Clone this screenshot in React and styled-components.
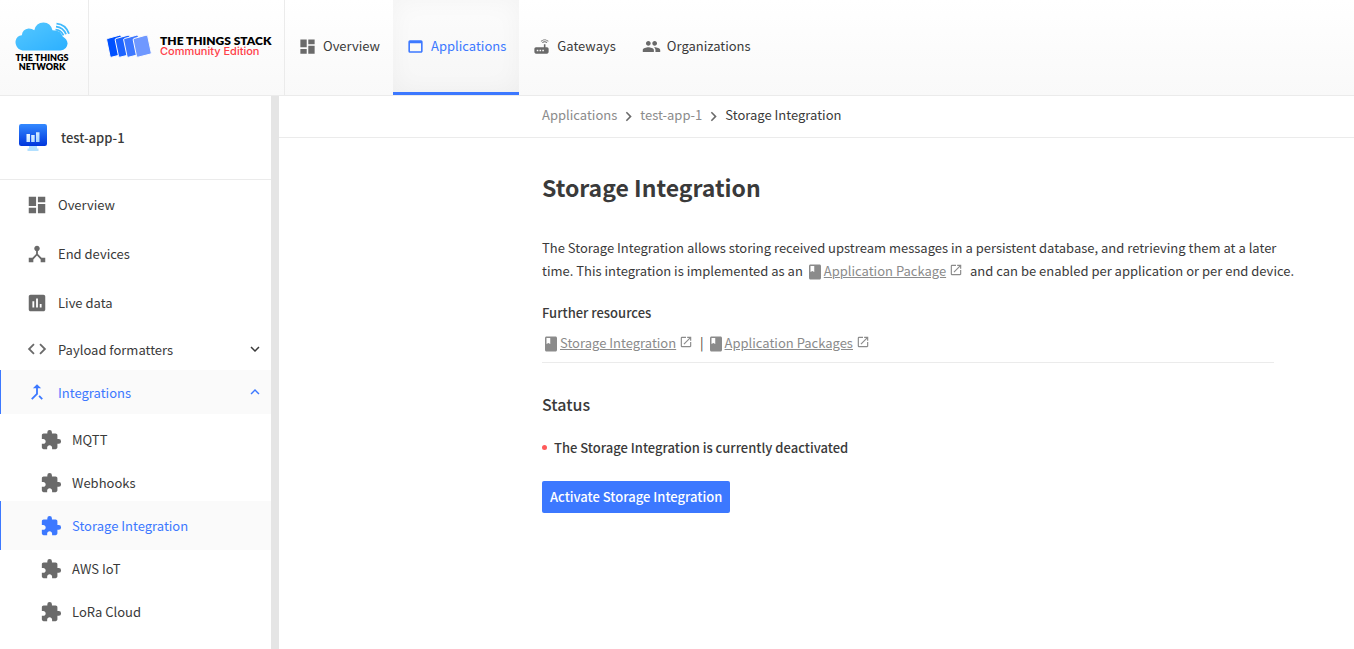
import React from 'react';
import styled, { createGlobalStyle, css } from 'styled-components';
import {
  MdDashboard, MdWebAsset, MdRouter, MdPeople, MdDeviceHub, MdAssessment, MdCode,
  MdCallMerge, MdExtension, MdExpandMore, MdExpandLess, MdChevronRight, MdBook, MdLaunch,
} from 'react-icons/md';

const color = {
  text: '#3a3a3a',
  icon: '#6a6a6a',
  subtle: '#8b8b8b',
  blue: '#3c78ff',
  border: '#ebebeb',
  hover: '#fafafa',
};

const GlobalStyle = createGlobalStyle`
  *, *::before, *::after { box-sizing: border-box; }
  body {
    margin: 0;
    background: #fff;
    color: ${color.text};
    font-family: "Noto Sans CJK SC", "Noto Sans", sans-serif;
    font-size: 13px;
    line-height: 23px;
  }
  a { color: inherit; text-decoration: none; }
  ul, ol { list-style: none; margin: 0; padding: 0; }
  h1, h2, h3, p { margin: 0; }
  svg { flex: none; }
`;

const Page = styled.div`
  display: flex;
  flex-direction: column;
  min-height: 100vh;
`;

const Header = styled.header`
  display: flex;
  height: 96px;
  border-bottom: 1px solid ${color.border};
  background: linear-gradient(#fff, #f9f9f9);
`;

const LogoLink = styled.a`
  display: flex;
  align-items: center;
  border-right: 1px solid ${color.border};
`;

const NetworkLogo = styled(LogoLink)`
  flex-direction: column;
  justify-content: center;
  width: 89px;
  padding: 0 4px 2px 0;
  color: #000;
  font: 800 9px/9px Lato, sans-serif;
  text-align: center;
  svg { margin-bottom: 2px; }
`;

const StackLogo = styled(LogoLink)`
  gap: 8px;
  width: 196px;
  padding: 0 0 4px 17px;
  white-space: nowrap;
`;

const StackName = styled.span`
  display: block;
  color: #000;
  font: 800 12px/11px Lato, sans-serif;
`;

const StackEdition = styled.span`
  display: block;
  color: #ff4048;
  font: 500 11px/11px Inter, sans-serif;
`;

const Nav = styled.nav`
  display: flex;
`;

const NavLink = styled.a`
  display: flex;
  align-items: center;
  gap: 6px;
  padding: 0 13px 2px;
  border-bottom: 3px solid transparent;
  svg { margin-top: 2px; color: ${color.icon}; }
  ${(p) => p.$active && css`
    color: ${color.blue};
    border-bottom-color: ${color.blue};
    background: rgba(0, 0, 0, 0.01);
    box-shadow: inset 0 0 24px rgba(0, 0, 0, 0.04);
    svg { color: inherit; }
  `}
`;

const Body = styled.div`
  display: flex;
  flex: 1;
`;

const Sidebar = styled.aside`
  flex: none;
  width: 279px;
  border-right: 8px solid #e5e5e5;
`;

const AppTitle = styled.a`
  display: flex;
  align-items: center;
  gap: 14px;
  height: 84px;
  padding-left: 19px;
  border-bottom: 1px solid ${color.border};
  font-weight: 500;
`;

const itemStyle = css`
  display: flex;
  align-items: center;
  gap: 10px;
  width: 100%;
  padding: 0 7px 0 25px;
  border: 0;
  border-left: 1px solid transparent;
  background: none;
  color: inherit;
  font: inherit;
  text-align: left;
  svg { color: ${color.icon}; }
  ${(p) => p.$active && css`
    color: ${color.blue};
    border-left-color: ${color.blue};
    background: ${color.hover};
    svg { color: inherit; }
  `}
`;

const ItemLink = styled.a`
  ${itemStyle}
  height: 49px;
`;

const ItemToggle = styled.button`
  ${itemStyle}
  height: 44px;
  margin-bottom: -1px;
  cursor: pointer;
  svg:last-child { margin-left: auto; color: inherit; }
`;

const ItemList = styled.ul`
  display: flex;
  flex-direction: column;
  > li { display: flex; flex-direction: column; }
`;

const SubList = styled.ul`
  padding-top: 2px;
  li { height: 43px; }
`;

const SubLink = styled(ItemLink)`
  padding-left: 39px;
`;

const Main = styled.main`
  flex: 1;
  min-width: 0;
`;

const Container = styled.div`
  max-width: 812px;
  margin-left: auto;
  padding-right: 80px;
`;

const BreadcrumbBar = styled.nav`
  border-bottom: 1px solid ${color.border};
`;

const Breadcrumbs = styled.ol`
  display: flex;
  align-items: center;
  height: 41px;
  padding-bottom: 4px;
  li { display: flex; align-items: center; }
  svg { margin: 3px 2px 0; color: ${color.icon}; }
  a { color: ${color.subtle}; }
`;

const Title = styled.h1`
  margin-top: 31px;
  font-size: 23px;
  line-height: 36px;
  font-weight: 600;
`;

const Intro = styled.p`
  margin: 31px -24px 0 0;
`;

const Subheading = styled.h3`
  margin-top: 19px;
  font-size: 13px;
  font-weight: 500;
`;

const Resources = styled.div`
  margin-top: 7px;
  padding-bottom: 8px;
  border-bottom: 1px solid ${color.border};
`;

const DocAnchor = styled.a`
  color: ${color.subtle};
  span { text-decoration: underline; }
  svg { vertical-align: middle; }
  svg:last-child { margin: 0 4px 0 3px; vertical-align: -1px; }
`;

const StatusTitle = styled.h2`
  margin-top: 29px;
  font-size: 16px;
  line-height: 25px;
  font-weight: 500;
`;

const StatusLine = styled.p`
  display: flex;
  align-items: center;
  gap: 7px;
  margin-top: 19px;
  font-weight: 500;
  &::before {
    content: '';
    width: 5px;
    height: 5px;
    border-radius: 50%;
    background: #ff5a5a;
  }
`;

const PrimaryButton = styled.button`
  height: 32px;
  margin-top: 22px;
  padding: 0 8px 2px;
  border: 0;
  border-radius: 2px;
  background: ${color.blue};
  color: #fff;
  font: inherit;
  font-weight: 500;
  cursor: pointer;
`;

const CloudMark = () => (
  <svg width="56" height="29" viewBox="0 0 56 29" aria-hidden="true">
    <defs>
      <linearGradient id="cloud" x1="0" y1="0" x2="1" y2="1">
        <stop offset="0" stopColor="#56c8ff" />
        <stop offset="1" stopColor="#2cb0ff" />
      </linearGradient>
    </defs>
    <path fill="url(#cloud)" d="M8.500 28.500A8.200 8.200 0 0 1 3.800 14.800Q5.300 13.600 7.800 13.200 8.500 7.200 14.500 6.600 18 6.500 20.300 8.200 22 .6 29.500.5 36.600.7 38.500 8.300 40 8.300 41 8.500 46.500 8.700 48.700 14.500 53.200 17.200 53.600 21.500 53 27.800 46.500 28.500Z" />
    <g fill="none" stroke="#40b9fc" strokeWidth="1.800">
      <path d="M41.500 7.600c3.800.2 6.500 2.300 8 5.700" />
      <path d="M42 4.600c5 .4 8.200 3 10 7.700" />
      <path d="M42.500 1.600c6 .4 10.500 4.200 12.500 10.200" />
    </g>
  </svg>
);

const StackMark = () => (
  <svg width="46" height="24" viewBox="0 0 46 24" aria-hidden="true">
    {[['#0050ff', 0], ['#1d63ff', 8.500], ['#3e78ff', 17], ['#6f98ff', 26.500]].map(([fill, x]) => (
      <path
        key={fill}
        transform={`translate(${x} 0)`}
        d="M1.500 4.500 13.500 1.200Q14.800 1 15.200 2L18.700 18.500Q18.900 19.800 17.800 20.100L5.500 23.200Q4.300 23.400 4 22.200L.700 6Q.500 4.800 1.500 4.500Z"
        fill={fill}
        stroke="#fcfcfc"
        strokeWidth="1"
      />
    ))}
  </svg>
);

const AppMark = () => (
  <svg width="28" height="28" viewBox="0 0 28 28" aria-hidden="true">
    <defs>
      <linearGradient id="screen" x1="0" y1="0" x2="0" y2="1">
        <stop offset="0" stopColor="#3389ff" />
        <stop offset="1" stopColor="#0036dc" />
      </linearGradient>
      <linearGradient id="bars" x1="0" y1="0" x2="1" y2="1">
        <stop offset="0" stopColor="#fff" />
        <stop offset="1" stopColor="#9fd2ff" />
      </linearGradient>
    </defs>
    <path d="M10 22h8v2.500h1.500V27h-11v-2.500H10z" fill="#b3e0ff" />
    <rect width="28" height="22" rx="2.200" fill="url(#screen)" />
    <path d="M7.500 10h3.500v8H7.500zM12.200 11h3.500v7h-3.500zM17 8.200h3.500v9.800H17z" fill="url(#bars)" />
  </svg>
);

const NAV = [
  ['Overview', MdDashboard],
  ['Applications', MdWebAsset],
  ['Gateways', MdRouter],
  ['Organizations', MdPeople],
];

const ITEMS = [
  ['Overview', MdDashboard],
  ['End devices', MdDeviceHub],
  ['Live data', MdAssessment],
];

const INTEGRATIONS = ['MQTT', 'Webhooks', 'Storage Integration', 'AWS IoT', 'LoRa Cloud'];

const DocLink = ({ children }) => (
  <DocAnchor href="#docs">
    <MdBook size={18} />
    <span>{children}</span>
    <MdLaunch size={14} />
  </DocAnchor>
);

export default function App() {
  return (
    <Page>
      <GlobalStyle />
      <Header>
        <NetworkLogo href="#home">
          <CloudMark />
          <span>THE THINGS</span>
          <span>NETWORK</span>
        </NetworkLogo>
        <StackLogo href="#stack">
          <StackMark />
          <span>
            <StackName>THE THINGS STACK</StackName>
            <StackEdition>Community Edition</StackEdition>
          </span>
        </StackLogo>
        <Nav aria-label="Main">
          {NAV.map(([label, Icon]) => (
            <NavLink key={label} href={`#${label}`} $active={label === 'Applications'}>
              <Icon size={19} />
              {label}
            </NavLink>
          ))}
        </Nav>
      </Header>
      <Body>
        <Sidebar>
          <AppTitle href="#app">
            <AppMark />
            test-app-1
          </AppTitle>
          <ItemList>
            {ITEMS.map(([label, Icon]) => (
              <li key={label}>
                <ItemLink href={`#${label}`}>
                  <Icon size={22} />
                  {label}
                </ItemLink>
              </li>
            ))}
            <li>
              <ItemToggle type="button" aria-expanded="false">
                <MdCode size={22} />
                Payload formatters
                <MdExpandMore size={18} />
              </ItemToggle>
            </li>
            <li>
              <ItemToggle type="button" aria-expanded="true" $active>
                <MdCallMerge size={22} />
                Integrations
                <MdExpandLess size={18} />
              </ItemToggle>
              <SubList>
                {INTEGRATIONS.map((label) => (
                  <li key={label}>
                    <SubLink href={`#${label}`} $active={label === 'Storage Integration'}>
                      <MdExtension size={22} />
                      {label}
                    </SubLink>
                  </li>
                ))}
              </SubList>
            </li>
          </ItemList>
        </Sidebar>
        <Main>
          <BreadcrumbBar aria-label="Breadcrumb">
            <Container>
              <Breadcrumbs>
                <li><a href="#applications">Applications</a><MdChevronRight size={19} /></li>
                <li><a href="#test-app-1">test-app-1</a><MdChevronRight size={19} /></li>
                <li aria-current="page">Storage Integration</li>
              </Breadcrumbs>
            </Container>
          </BreadcrumbBar>
          <Container>
            <Title>Storage Integration</Title>
            <Intro>
              The Storage Integration allows storing received upstream messages in a persistent
              database, and retrieving them at a later time. This integration is implemented as
              an <DocLink>Application Package</DocLink> and can be enabled per application or per
              end device.
            </Intro>
            <Subheading>Further resources</Subheading>
            <Resources>
              <DocLink>Storage Integration</DocLink> | <DocLink>Application Packages</DocLink>
            </Resources>
            <StatusTitle>Status</StatusTitle>
            <StatusLine>The Storage Integration is currently deactivated</StatusLine>
            <PrimaryButton type="button">Activate Storage Integration</PrimaryButton>
          </Container>
        </Main>
      </Body>
    </Page>
  );
}
